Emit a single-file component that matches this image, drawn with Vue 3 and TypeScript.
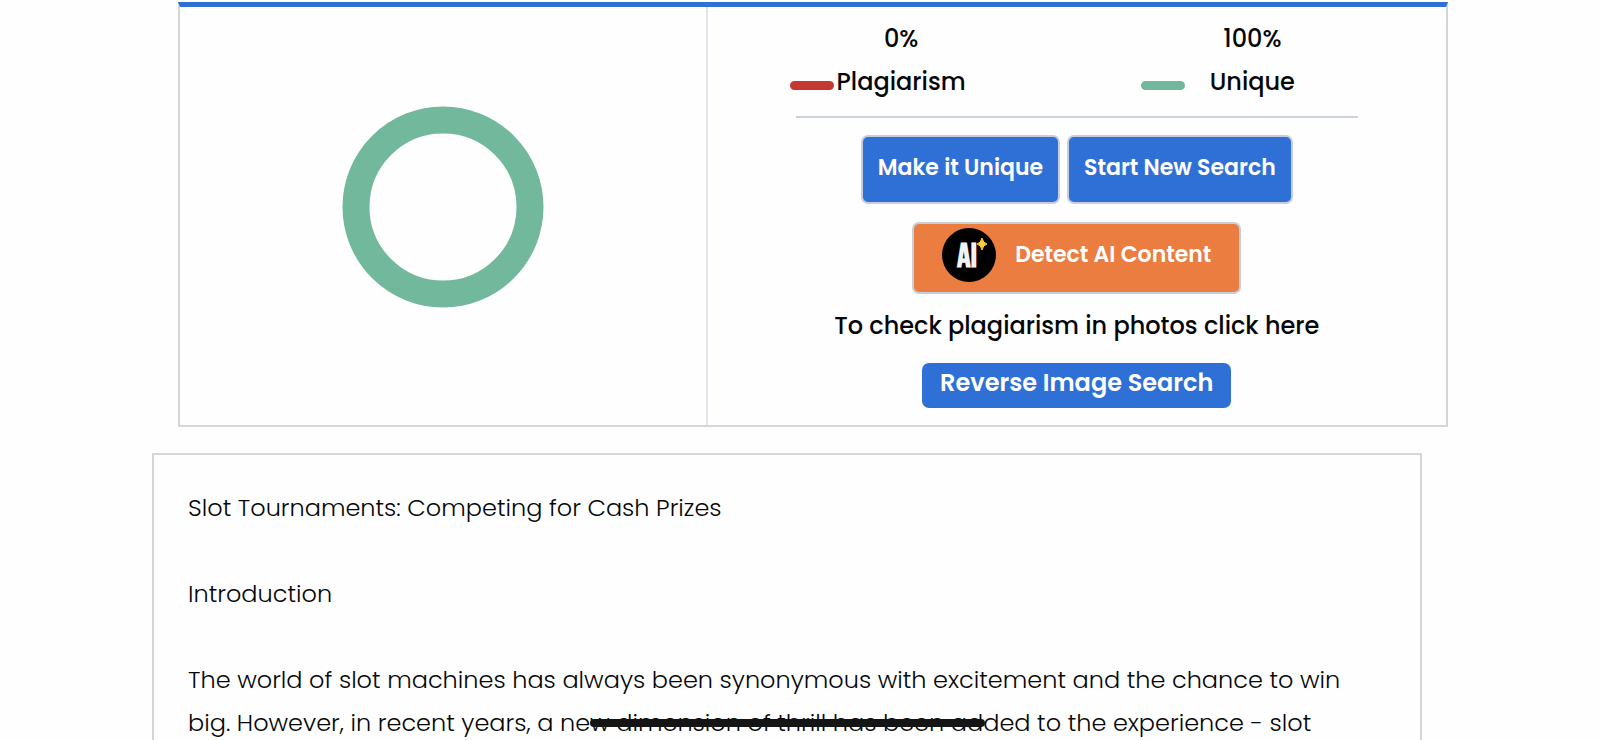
<script setup lang="ts">
interface Stat {
  value: string
  label: string
  tone: 'bad' | 'good'
}

const stats: Stat[] = [
  { value: '0%', label: 'Plagiarism', tone: 'bad' },
  { value: '100%', label: 'Unique', tone: 'good' },
]
</script>

<template>
  <main class="page">
    <section class="result">
      <div class="chart">
        <svg class="donut" viewBox="0 0 202 202" role="img" aria-label="Unique share of the text">
          <circle cx="101" cy="101" r="87" fill="none" stroke="#71b89d" stroke-width="27" />
        </svg>
      </div>
      <div class="summary">
        <div class="stats">
          <div v-for="stat in stats" :key="stat.label" class="stat">
            <span class="value">{{ stat.value }}</span>
            <span class="mark" :class="stat.tone"></span>
            <span class="label">{{ stat.label }}</span>
          </div>
        </div>
        <hr class="rule" />
        <div class="actions">
          <button type="button" class="btn">Make it Unique</button>
          <button type="button" class="btn">Start New Search</button>
        </div>
        <button type="button" class="btn detect">
          <svg class="logo" viewBox="0 0 54 54" aria-hidden="true">
            <circle cx="27" cy="27" r="27" fill="#000" />
            <text x="25" y="39" class="logo-text">AI</text>
            <path d="M40 10Q41 15 45 16Q41 17 40 22Q39 17 35 16Q39 15 40 10Z" fill="#fcce3b" stroke="#fcce3b" />
          </svg>
          <span>Detect AI Content</span>
        </button>
        <p class="hint">To check plagiarism in photos click here</p>
        <button type="button" class="reverse">Reverse Image Search</button>
      </div>
    </section>

    <article class="text">
      <p>Slot Tournaments: Competing for Cash Prizes</p>
      <p>Introduction</p>
      <p>
        The world of slot machines has always been synonymous with excitement and the chance to win
        big. However, in recent years, a ne<span class="struck">w dimension of thrill has been ad</span>ded to the experience - slot
      </p>
    </article>
  </main>
</template>

<style>
body {
  margin: 0;
  background: #fefefe;
}
</style>

<style scoped>
.page {
  box-sizing: border-box;
  min-height: 100vh;
  padding-top: 2px;
  display: flex;
  flex-direction: column;
  gap: 26px;
  font-family: Poppins, Inter, "Open Sans", sans-serif;
  font-size: 24px;
  color: #050607;
}

.result {
  margin: 0 152px 0 178px;
  display: grid;
  grid-template-columns: 5fr 7fr;
  border: 2px solid #d6d6d6;
  border-top: 5px solid #2f70d6;
}

.chart {
  display: flex;
  align-items: center;
  justify-content: center;
  border-right: 2px solid #e2e6ef;
  padding-bottom: 18px;
}

.donut {
  width: 202px;
  height: 202px;
}

.summary {
  display: flex;
  flex-direction: column;
  align-items: center;
  padding: 10px 18px 17px;
  font-weight: 500;
}

.stats {
  align-self: stretch;
  display: grid;
  grid-template-columns: 1fr 1fr;
}

.stat {
  display: grid;
  grid-template-columns: 44px 1fr 44px;
  line-height: 43px;
  padding: 0 64px;
  text-align: center;
}

.value {
  grid-column: 1 / -1;
}

.mark {
  height: 9px;
  margin-top: 8px;
  border-radius: 5px;
  align-self: center;
}

.bad {
  background: #c43831;
}

.good {
  background: #71b89d;
}

.label {
  white-space: nowrap;
}

.rule {
  width: 80%;
  margin: 13px 0 17px;
  border: 0;
  border-top: 2px solid #cbd2dd;
}

.actions {
  display: flex;
  gap: 7px;
}

.btn,
.reverse {
  font: inherit;
  font-weight: 600;
  color: #fff;
  background: #2f70d6;
  border: 0;
  border-radius: 7px;
  cursor: pointer;
  white-space: nowrap;
}

.btn {
  font-size: 22px;
  line-height: 28px;
  padding: 17px 15px 20px;
  border: 2px solid #c6cedd;
}

.detect {
  display: flex;
  align-items: center;
  gap: 19px;
  margin-top: 18px;
  padding: 4px 28px 10px;
  background: #ea7d3f;
}

.logo {
  width: 54px;
  height: 54px;
}

.logo-text {
  font-family: "Bebas Neue", "Liberation Sans Narrow", "Roboto Condensed", Roboto, sans-serif;
  font-size: 34px;
  font-weight: 700;
  text-anchor: middle;
  fill: #f2f2f2;
}

.hint {
  margin: 10px 0 16px;
  line-height: 43px;
}

.reverse {
  line-height: 39px;
  padding: 0 18px 6px;
}

.text {
  flex: 1;
  margin: 0 178px 0 152px;
  padding: 31px 34px 0;
  border: 2px solid #d6d6d6;
  border-bottom: 0;
  font-weight: 300;
  line-height: 43px;
}

.text p {
  margin: 0 0 43px;
}

.text p:last-child {
  margin-bottom: 0;
}

.struck {
  position: relative;
}

.struck::after {
  content: "";
  position: absolute;
  left: 0;
  right: -2px;
  top: 50%;
  height: 8px;
  margin-top: -4px;
  border-radius: 4px;
  background: #151515;
}
</style>
